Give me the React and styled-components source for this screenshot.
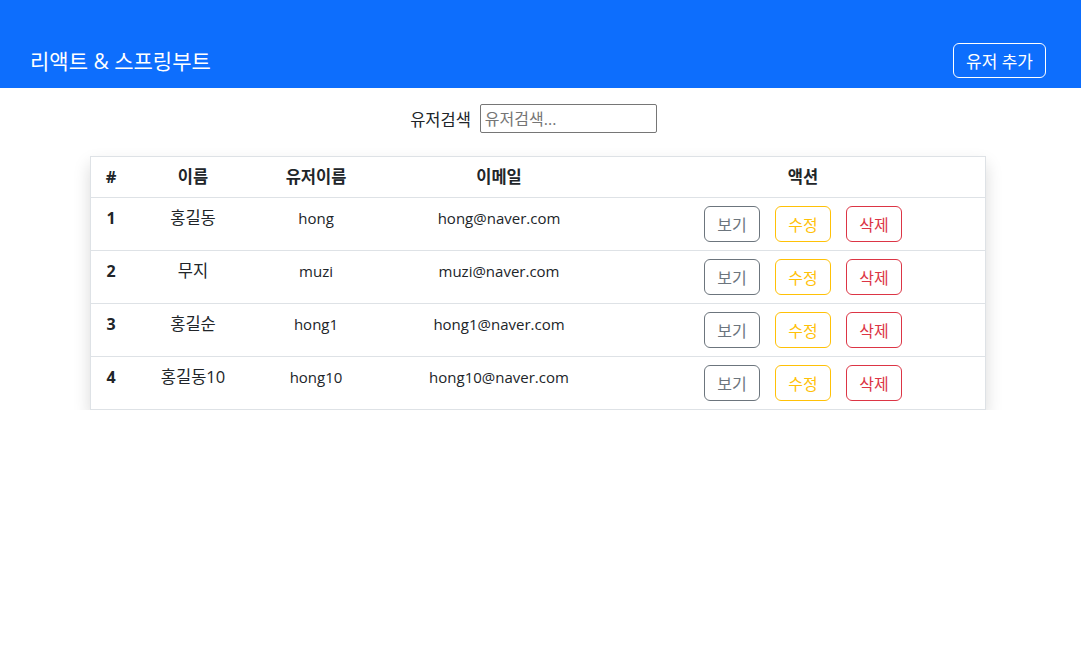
import React from 'react';
import styled, { createGlobalStyle } from 'styled-components';

const GlobalStyle = createGlobalStyle`
  body {
    margin: 0;
    font-family: 'Open Sans', 'Noto Sans CJK KR', sans-serif;
    font-size: 16.5px;
    color: #212529;
    background: #fff;
  }
`;

const NavBar = styled.nav`
  height: 88px;
  box-sizing: border-box;
  background: #0d6efd;
  display: flex;
  align-items: center;
  justify-content: space-between;
  padding: 43px 35px 10px 30px;
`;

const Brand = styled.span`
  color: #fff;
  font-size: 21px;
  line-height: 26px;
`;

const NavButton = styled.button`
  height: 35px;
  padding: 0 12px;
  font-family: inherit;
  font-size: 17px;
  color: #fff;
  background: transparent;
  border: 1px solid #fff;
  border-radius: 6px;
`;

const SearchRow = styled.div`
  display: flex;
  justify-content: center;
  align-items: center;
  gap: 9px;
  margin: 16px 0 23px;
  padding-right: 14px;
`;

const SearchLabel = styled.label`
  font-size: 16.5px;
`;

const SearchInput = styled.input`
  width: 177px;
  height: 29px;
  box-sizing: border-box;
  padding: 0 4px;
  font-family: inherit;
  font-size: 16px;
  border: 1px solid #767676;
  border-radius: 2px;
  &::placeholder {
    color: #757575;
  }
`;

const TableWrap = styled.div`
  width: 896px;
  box-sizing: border-box;
  margin: 0 0 0 90px;
  border: 1px solid #dee2e6;
  box-shadow: 0 8px 16px rgba(0, 0, 0, 0.15);
`;

const Table = styled.table`
  width: 100%;
  border-collapse: collapse;
  table-layout: fixed;

  th, td {
    padding: 8px 0;
    line-height: 24px;
    text-align: center;
    vertical-align: top;
  }

  th {
    font-weight: 700;
  }

  tbody tr {
    border-top: 1px solid #dee2e6;
  }
`;

const NumCell = styled.td`
  font-weight: 700;
  font-size: 16px;
`;

const LatinCell = styled.td`
  font-size: 15px;
`;

const Actions = styled.div`
  display: flex;
  justify-content: center;
  gap: 15px;
`;

const tones = {
  secondary: '#6c757d',
  warning: '#ffc107',
  danger: '#dc3545',
};

const ActionButton = styled.button`
  width: 56px;
  height: 36px;
  font-family: inherit;
  font-size: 16px;
  background: #fff;
  color: ${({ $tone }) => tones[$tone]};
  border: 1px solid ${({ $tone }) => tones[$tone]};
  border-radius: 6px;
  padding: 0;
`;

const users = [
  { id: 1, name: '홍길동', username: 'hong', email: 'hong@naver.com' },
  { id: 2, name: '무지', username: 'muzi', email: 'muzi@naver.com' },
  { id: 3, name: '홍길순', username: 'hong1', email: 'hong1@naver.com' },
  { id: 4, name: '홍길동10', username: 'hong10', email: 'hong10@naver.com' },
];

const App = () => {
  return (
    <>
      <GlobalStyle />
      <NavBar>
        <Brand>리액트 &amp; 스프링부트</Brand>
        <NavButton>유저 추가</NavButton>
      </NavBar>
      <SearchRow>
        <SearchLabel>유저검색</SearchLabel>
        <SearchInput placeholder='유저검색...' />
      </SearchRow>
      <TableWrap>
        <Table>
          <colgroup>
            <col style={{ width: 40 }} />
            <col style={{ width: 124 }} />
            <col style={{ width: 122 }} />
            <col style={{ width: 244 }} />
            <col />
          </colgroup>
          <thead>
            <tr>
              <th>#</th>
              <th>이름</th>
              <th>유저이름</th>
              <th>이메일</th>
              <th>액션</th>
            </tr>
          </thead>
          <tbody>
            {users.map((user) => (
              <tr key={user.id}>
                <NumCell>{user.id}</NumCell>
                <td>{user.name}</td>
                <LatinCell>{user.username}</LatinCell>
                <LatinCell>{user.email}</LatinCell>
                <td>
                  <Actions>
                    <ActionButton $tone='secondary'>보기</ActionButton>
                    <ActionButton $tone='warning'>수정</ActionButton>
                    <ActionButton $tone='danger'>삭제</ActionButton>
                  </Actions>
                </td>
              </tr>
            ))}
          </tbody>
        </Table>
      </TableWrap>
    </>
  );
};

export default App;
